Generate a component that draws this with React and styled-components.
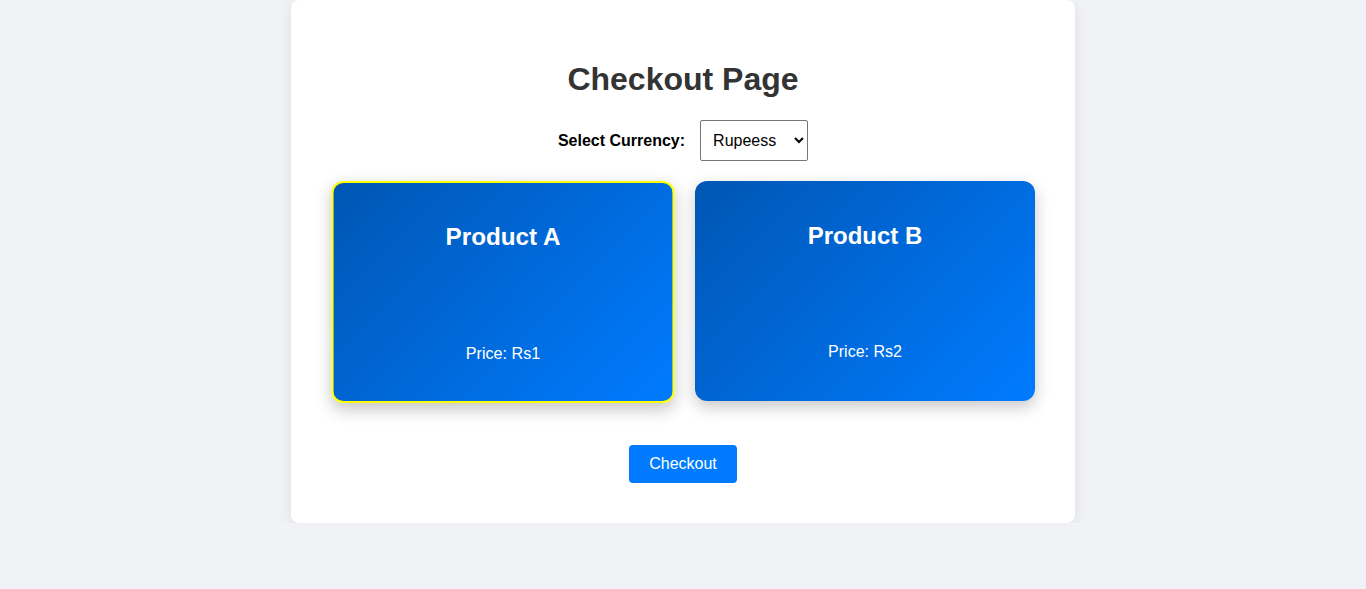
import React, { useState } from 'react'
import styled, { createGlobalStyle } from 'styled-components'

const products = [
  { id: 'a', name: 'Product A', price: 1 },
  { id: 'b', name: 'Product B', price: 2 },
]

const symbols = { rupees: 'Rs', dollars: '$' }

const App = () => {
  const [currency, setCurrency] = useState('rupees')
  const [selected, setSelected] = useState('a')

  return (
    <>
      <GlobalStyle />
      <Container>
        <Title>Checkout Page</Title>
        <CurrencyRow>
          <Label htmlFor="currency">Select Currency:</Label>
          <Select id="currency" value={currency} onChange={e => setCurrency(e.target.value)}>
            <option value="rupees">Rupeess</option>
            <option value="dollars">Dollars</option>
          </Select>
        </CurrencyRow>

        <Cards>
          {products.map(p => {
            const active = selected === p.id
            return (
              <Card key={p.id} $selected={active} onClick={() => setSelected(p.id)}>
                <CardTitle $selected={active}>{p.name}</CardTitle>
                <Price $selected={active}>Price: {symbols[currency]}{p.price}</Price>
              </Card>
            )
          })}
        </Cards>

        <Button>Checkout</Button>
      </Container>
    </>
  )
}

export default App

const GlobalStyle = createGlobalStyle`
  body {
    margin: 0;
    background: #f0f2f5;
    font-family: "Liberation Sans", Arial, sans-serif;
  }
`

const Container = styled.div`
  width: 784px;
  box-sizing: border-box;
  margin: 0 auto;
  padding: 40px;
  background: #fff;
  border-radius: 8px;
  box-shadow: 0 4px 14px rgba(0, 0, 0, 0.08);
  display: flex;
  flex-direction: column;
  align-items: center;
`

const Title = styled.h1`
  font-size: 32px;
  line-height: 37px;
  font-weight: 700;
  color: #333;
  margin: 21px 0 22px;
`

const CurrencyRow = styled.div`
  display: flex;
  align-items: center;
  margin-bottom: 20px;
`

const Label = styled.label`
  font-size: 16px;
  font-weight: 700;
  color: #000;
  margin-right: 15px;
`

const Select = styled.select`
  width: 108px;
  height: 41px;
  padding: 0 8px;
  font-size: 16px;
  font-family: "Liberation Sans", Arial, sans-serif;
  color: #000;
  background: #fff;
  border: 1px solid #767676;
  border-radius: 2px;
`

const Cards = styled.div`
  display: grid;
  grid-template-columns: 340px 340px;
  gap: 22px;
  width: 100%;
  justify-content: end;
`

const Card = styled.div`
  height: 220px;
  box-sizing: border-box;
  padding: 20px;
  border-radius: 12px;
  border: ${props => (props.$selected ? '2px solid #ffff00' : 'none')};
  background: linear-gradient(135deg, #0056b3, #007bff);
  color: #fff;
  box-shadow: 0 6px 16px rgba(0, 0, 0, 0.22);
  display: flex;
  flex-direction: column;
  justify-content: space-between;
  align-items: center;
  cursor: pointer;
  transform: ${props => (props.$selected ? 'translateY(1px) scale(1.01)' : 'none')};
`

const CardTitle = styled.h2`
  font-size: 24px;
  line-height: 28px;
  font-weight: 700;
  margin: ${props => (props.$selected ? '19px' : '21px')} 0 0;
`

const Price = styled.p`
  font-size: 16px;
  line-height: 18px;
  margin: 0 0 ${props => (props.$selected ? '18px' : '20px')};
`

const Button = styled.button`
  margin-top: 44px;
  padding: 10px 20px;
  font-size: 16px;
  line-height: 18px;
  font-family: "Liberation Sans", Arial, sans-serif;
  color: #fff;
  background: #007bff;
  border: none;
  border-radius: 4px;
  cursor: pointer;
`
